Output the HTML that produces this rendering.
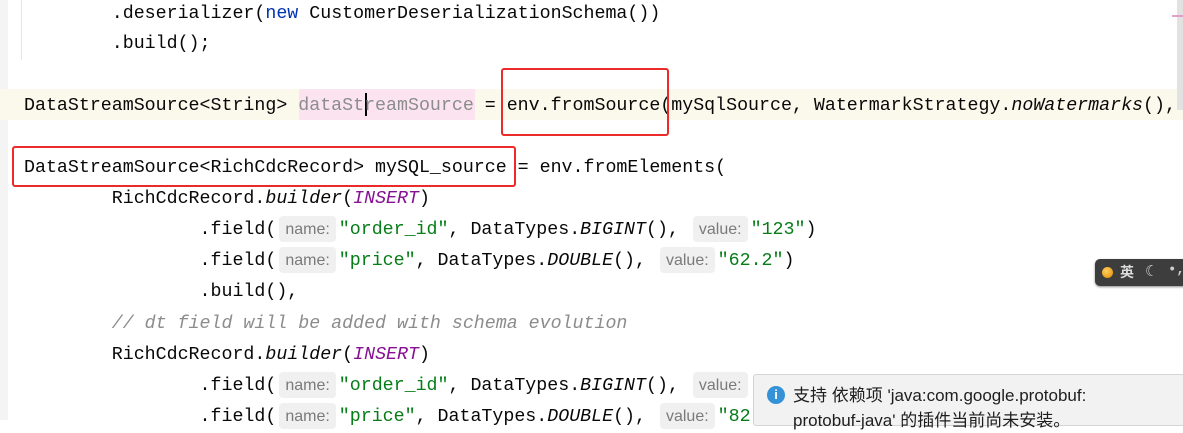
<!DOCTYPE html>
<html><head><meta charset="utf-8"><style>
body{margin:0;width:1183px;height:420px;overflow:hidden;background:#fff;position:relative;font-family:"Liberation Mono",monospace;}
.l{position:absolute;left:24px;height:31px;line-height:31px;font-size:18.3px;color:#080808;white-space:pre;}
.i{font-style:italic}
.k{color:#0033b3}
.s{color:#067d17}
.p{color:#871094;font-style:italic}
.c{color:#8c8c8c;font-style:italic}
.h{display:inline-block;font-family:"Liberation Sans",sans-serif;font-size:16px;color:#7a7a7a;background:#f0f0f0;border-radius:4px;height:26px;line-height:27px;padding:0 6px;margin:0 3px;vertical-align:middle;}
.box{position:absolute;border:2px solid #ec2a2a;border-radius:3px;}
</style></head><body>
<div style="position:absolute;left:0;top:0;width:8px;height:420px;background:#f4f4f4"></div>
<div style="position:absolute;left:21px;top:0;width:1px;height:60px;background:#e6e6e6"></div>
<div style="position:absolute;left:0;top:89px;width:1183px;height:31px;background:#fbf8ec"></div>
<div style="position:absolute;left:1177px;top:0;width:6px;height:110px;background:#e2e2e2"></div>
<div style="position:absolute;left:1172px;top:15px;width:11px;height:2px;background:#e0a0c8"></div>
<div style="position:absolute;left:299px;top:89px;width:176px;height:31px;background:#fbe4f0"></div>
<div style="position:absolute;left:365px;top:93px;width:2px;height:23px;background:#000"></div>

<div class="l" style="top:-1px">        .deserializer(<span class="k">new</span> CustomerDeserializationSchema())</div>
<div class="l" style="top:29px">        .build();</div>
<div class="l" style="top:91px">DataStreamSource&lt;String&gt; <span style="color:#8c8c8c">dataStreamSource</span> = env.fromSource(mySqlSource, WatermarkStrategy.<span class="i">noWatermarks</span>(),</div>
<div class="l" style="top:153px">DataStreamSource&lt;RichCdcRecord&gt; mySQL_source = env.fromElements(</div>
<div class="l" style="top:184px">        RichCdcRecord.<span class="i">builder</span>(<span class="p">INSERT</span>)</div>
<div class="l" style="top:215px">                .field(<span class="h">name:</span><span class="s">"order_id"</span>, DataTypes.<span class="i">BIGINT</span>(), <span class="h">value:</span><span class="s">"123"</span>)</div>
<div class="l" style="top:246px">                .field(<span class="h">name:</span><span class="s">"price"</span>, DataTypes.<span class="i">DOUBLE</span>(), <span class="h">value:</span><span class="s">"62.2"</span>)</div>
<div class="l" style="top:277px">                .build(),</div>
<div class="l" style="top:309px">        <span class="c">// dt field will be added with schema evolution</span></div>
<div class="l" style="top:340px">        RichCdcRecord.<span class="i">builder</span>(<span class="p">INSERT</span>)</div>
<div class="l" style="top:371px">                .field(<span class="h">name:</span><span class="s">"order_id"</span>, DataTypes.<span class="i">BIGINT</span>(), <span class="h">value:</span><span class="s">"1</span></div>
<div class="l" style="top:402px">                .field(<span class="h">name:</span><span class="s">"price"</span>, DataTypes.<span class="i">DOUBLE</span>(), <span class="h">value:</span><span class="s">"82</span></div>

<div class="box" style="left:501px;top:68px;width:164px;height:64px"></div>
<div class="box" style="left:12px;top:146px;width:500px;height:37px"></div>

<div style="position:absolute;left:1095px;top:259px;width:95px;height:27px;background:#3d3d3d;border-radius:5px;box-shadow:0 1px 2px #888"></div>
<div style="position:absolute;left:1102px;top:267px;width:11px;height:11px;border-radius:50%;background:radial-gradient(circle at 40% 35%,#ffd060,#e08a00)"></div>
<div style="position:absolute;left:1120px;top:262px;font-family:'Noto Sans CJK SC',sans-serif;font-size:14px;color:#ddd;font-weight:bold">英</div>
<div style="position:absolute;left:1145px;top:262px;font-size:15px;color:#ccc">☾</div>
<div style="position:absolute;left:1168px;top:262px;font-size:14px;color:#ccc;font-weight:bold">•,</div>

<div style="position:absolute;left:753px;top:374px;width:440px;height:50px;background:#f2f2f2;border:1px solid #d4d4d4;border-radius:3px"></div>
<div style="position:absolute;left:767px;top:386px;width:18px;height:18px;border-radius:50%;background:#3592d6;color:#fff;font:bold 13px 'Liberation Sans',sans-serif;text-align:center;line-height:18px">i</div>
<div style="position:absolute;left:793px;top:383px;font-family:'Liberation Sans','Noto Sans CJK SC',sans-serif;font-size:17px;line-height:25px;color:#1e1e1e;white-space:nowrap">支持 依赖项 'java:com.google.protobuf:<br>protobuf-java' 的插件当前尚未安装。</div>
</body></html>
